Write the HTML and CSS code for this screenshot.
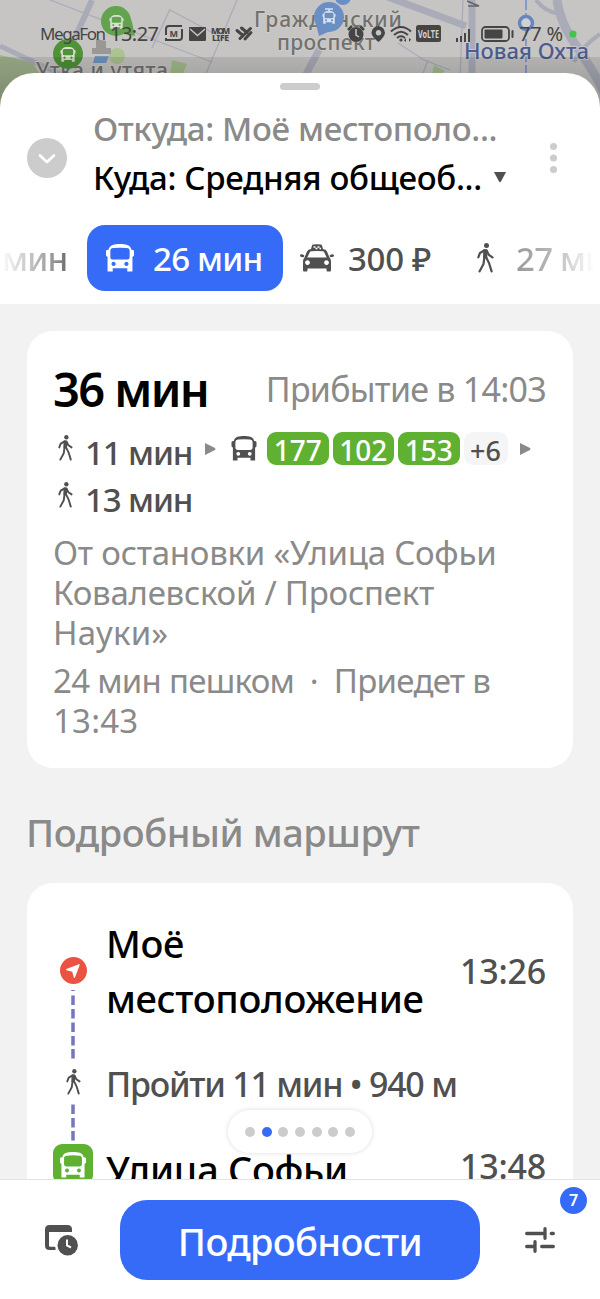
FILE: index.html
```
<!DOCTYPE html>
<html lang="ru">
<head>
<meta charset="utf-8">
<title>Маршрут</title>
<link rel="stylesheet" href="styles.css">
</head>
<body>
<svg class="defs" width="0" height="0" aria-hidden="true">
  <symbol id="bus" viewBox="0 0 27 27"><path fill-rule="evenodd" d="M6.500.9C10-.2 17-.2 20.500.9C23 1.700 24.200 3.500 24.500 5.500L26.300 5.800Q27 6.200 27 7V11Q26.800 12 25.500 12.300V26.500H20.500V23.500H6.500V26.500H1.500V12.300Q.2 12 0 11V7Q0 6.200.7 5.800L2.500 5.500C2.800 3.500 4 1.700 6.500.9ZM7 3.800Q4.200 4 4.200 6.500V12.500Q4.200 15 7 15H20Q22.800 15 22.800 12.500V6.500Q22.800 4 20 3.800Q13.500 3.200 7 3.800ZM7.300 17.200a2 2 0 1 0 .01 0ZM19.700 17.200a2 2 0 1 0 .01 0Z"/></symbol>
  <symbol id="walk" viewBox="0 0 17 30"><circle cx="9.500" cy="2.600" r="2.500"/><path d="M6.300 6.600 9.600 6 10.600 7 10.200 15 7.200 15.500 6 14Z"/><g fill="none" stroke="currentColor" stroke-width="2.200" stroke-linecap="round" stroke-linejoin="round"><path d="M7.500 7.300 3 10 1.300 14.300M10 8.200 11.800 11.800 15.500 14.300M7.400 14 6.500 21 2.500 28.400M9 14 12 20 14.600 28.400"/></g></symbol>
</svg>
<div class="screen">
  <svg class="map" viewBox="0 0 600 120" width="600" height="120">
    <defs><linearGradient id="shade" x1="0" y1="0" x2="0" y2="1"><stop offset="0" stop-color="#000" stop-opacity=".1"/><stop offset="1" stop-color="#000" stop-opacity=".28"/></linearGradient></defs>
    <rect width="600" height="120" fill="#c6c5c4"/>
    <path fill="#a2b48f" d="M0 55 32 62 70 120H0Z"/>
    <g fill="none" stroke="#a9acb8">
      <path stroke-width="6" d="M92 0 64 62"/><path stroke-width="5" d="M0 46 60 74"/>
      <path stroke-width="7" d="M385-4 466 26M472 0V80M320 48 304 78"/><path stroke-width="9" d="M557 0C562 36 585 52 604 92"/>
      <path stroke-width="4" d="M536 0Q545 12 560 14M600 34Q580 48 574 62"/>
      <g stroke-width="1.300"><path d="M50 0 212 62M170 9 152 48M237 0 205 76M170 10 230 42M398 43 424 60 450 70M422 76 428 60M463 0 460 80"/></g>
      <path stroke="#7f9cc9" stroke-width="2" stroke-dasharray="10 3" d="M526 0V80"/>
    </g>
    <path fill="none" stroke="#666" stroke-width="1.500" d="M467 1 479 6H468"/>
    <path fill="#a5bd8c" d="M172 60 187 64 182 76H170ZM434 65 445 71 438 76H432Z"/>
    <circle cx="117" cy="56" r="8" fill="#abc38f"/><path fill="#999894" d="M96 39 106 41V48H111V54H92V48H96Z"/><path fill="#7195bd" d="M95 56H109L106 63H93Z"/>
    <path fill="#63a24e" d="M104 30a14 14 0 1 1 28-8L135 36Z"/><circle cx="116" cy="21" r="15" fill="#63a24e"/>
    <path fill="#63a24e" d="M54 49 72 39 80 46Z"/>
    <g class="place"><text x="254" y="27" textLength="148">Гражданский</text><text x="277" y="50" textLength="98">проспект</text><text x="36" y="78" textLength="132">Утка и утята</text></g>
    <text class="metro" x="464" y="59" textLength="125">Новая Охта</text>
    <circle cx="68" cy="54" r="15" fill="#4f9238"/>
    <g fill="#d8e0d2"><use href="#bus" x="109" y="15" width="15" height="14"/><use href="#bus" x="60" y="47" width="16" height="15"/></g>
    <path fill="#698fc5" d="M316 24 319 36 337 28Z"/><circle cx="329" cy="17" r="15" fill="#698fc5"/><circle cx="343" cy="-3" r="8" fill="#698fc5"/>
    <use href="#bus" x="322" y="11" width="14" height="13" fill="#dce3ee"/><path fill="none" stroke="#dce3ee" stroke-width="1.500" d="M325 9H333M329 9V12"/>
    <circle cx="526" cy="23" r="6.500" fill="#cfd0d4" stroke="#6786bd" stroke-width="3.500"/>
    <rect y="57" width="600" height="63" fill="url(#shade)"/>
    <g fill="#454545">
      <text class="carrier" x="40" y="40" textLength="66">MegaFon</text><text class="clock" x="110" y="41" textLength="49">13:27</text>
      <path fill="none" stroke="#454545" stroke-width="2" d="M166 35V29Q166 26 169 26H182M166 38V40H179Q182 40 182 37V29"/><text class="tiny" x="169.500" y="37" textLength="9">M</text>
      <rect x="189" y="27" width="17" height="14" rx="1"/><path fill="none" stroke="#c6c5c4" stroke-width="1.500" d="M190 29 197.500 35.500 205 29"/>
      <text class="micro" x="211" y="33.500" textLength="19">MOM</text><text class="micro" x="212" y="41" textLength="17">LIFE</text>
      <path fill="none" stroke="#454545" stroke-width="3" stroke-linecap="round" d="M237 30.500 243 35.500M241.500 28 247 32.500M250.500 28.500 240 38.500M251 32.500 245 39"/>
      <circle cx="356" cy="34.500" r="7.500"/><path fill="none" stroke="#454545" stroke-width="2.500" d="M348 30 352 26M360 26 364 30"/><path fill="none" stroke="#c6c5c4" stroke-width="1.500" d="M356 29V35L359 37"/>
      <path fill-rule="evenodd" d="M378.500 26A7 7 0 0 1 385 33Q384.500 37 378.500 42Q372 37 371.500 33A7 7 0 0 1 378.500 26ZM378.500 30a2.800 2.800 0 1 0 .01 0Z"/>
      <g fill="none" stroke="#454545" stroke-width="2"><path d="M391 31.500Q401 22.500 411 31.500M394 35Q401 28.500 408 35M397 38Q401 34.500 405 38"/></g><circle cx="401" cy="40" r="1.600"/><path d="M406 38v4l-2-1.500M409 42v-4l2 1.500"/>
      <rect x="416" y="25" width="25" height="17" rx="2.500"/><text class="volte" x="418" y="37.500" textLength="21" lengthAdjust="spacingAndGlyphs">VoLTE</text>
      <path d="M456 38h2v4h-2ZM460 36h2v6h-2ZM464 33h2v9h-2ZM468 29h2v13h-2Z"/>
      <rect x="482" y="27" width="27" height="14" rx="3.500" fill="none" stroke="#454545" stroke-width="1.800"/><rect x="484.500" y="29.500" width="18" height="9" rx="1"/><rect x="511.500" y="30" width="2" height="8" rx="1"/>
      <text class="clock" x="519" y="41" textLength="44">77 %</text><circle cx="573" cy="34" r="3.500" fill="#42c34b"/>
    </g>
  </svg>

  <header class="sheet-head">
    <span class="handle"></span>
    <div class="head-row">
      <svg class="collapse" viewBox="0 0 40 40"><circle cx="20" cy="20" r="20" fill="#ccc"/><path d="M13 17.500 20 24 27 17.500" fill="none" stroke="#fff" stroke-width="2.800" stroke-linecap="round" stroke-linejoin="round"/></svg>
      <div class="endpoints">
        <div class="from">Откуда: Моё местополо...</div>
        <div class="to"><span>Куда: Средняя общеоб...</span><svg class="caret" viewBox="0 0 12 11"><path fill="#505050" d="M0 0H12L7 9.500Q6 11 5 9.500Z"/></svg></div>
      </div>
      <svg class="more" viewBox="0 0 7 30" fill="#ccc"><circle cx="3.500" cy="3.500" r="3.500"/><circle cx="3.500" cy="15" r="3.500"/><circle cx="3.500" cy="26.500" r="3.500"/></svg>
    </div>
    <nav class="tabs">
      <span class="tab-cut">мин</span>
      <span class="tab-active"><svg class="ic-bus"><use href="#bus"/></svg><span>26 мин</span></span>
      <span class="tab-taxi"><svg class="ic-taxi" viewBox="0 0 34 28"><path fill="#505050" fill-rule="evenodd" d="M11 5 12 1.500Q12.200.5 13.200.4Q17 0 20.800.4Q21.800.5 22 1.500L23 5Q26 5.200 27 7.500L29.500 13.500Q31 15 31 17.500V26.500Q31 27.500 30 27.500H27.500Q26.500 27.500 26.500 26.500V24.500H7.500V26.500Q7.500 27.500 6.500 27.500H4Q3 27.500 3 26.500V17.500Q3 15 4.500 13.500L7 7.500Q8 5.200 11 5ZM9.800 8.200 7.300 13.500H26.700L24.200 8.200Q23.800 7.300 22.800 7.200Q17 6.700 11.200 7.200Q10.200 7.300 9.800 8.200ZM7.500 16.200a2.400 2.400 0 1 0 .01 0ZM26.500 16.200a2.400 2.400 0 1 0 .01 0Z"/><path fill="#fff" d="M13.500 2.300h2v1.500h-2ZM17.500 2.300h2v1.500h-2ZM15.500 3.800h2v1.500h-2ZM19.500 3.800h1.500v1.500h-1.500Z"/><path stroke="#505050" stroke-width="2.500" stroke-linecap="round" d="M1.300 11.500 3 12M32.700 11.500 31 12"/></svg><span>300 ₽</span></span>
      <span class="tab-walk"><svg class="ic-walk"><use href="#walk"/></svg><span class="fade-out">27 мин</span></span>
    </nav>
  </header>

  <main class="content">
    <section class="card summary">
      <div class="total"><b>36 мин</b><span class="arrive">Прибытие в 14:03</span></div>
      <div class="legs">
        <div class="leg"><svg class="ic-leg"><use href="#walk"/></svg><span class="mins">11 мин</span><svg class="next" viewBox="0 0 11 12"><path fill="#8a8a8a" d="M0 0 10 5Q11 6 10 7L0 12Z"/></svg><svg class="ic-legbus"><use href="#bus"/></svg>
          <span class="lines"><i>177</i><i>102</i><i>153</i><i class="extra">+6</i></span><svg class="next last" viewBox="0 0 11 12"><path fill="#8a8a8a" d="M0 0 10 5Q11 6 10 7L0 12Z"/></svg></div>
        <div class="leg"><svg class="ic-leg"><use href="#walk"/></svg><span class="mins">13 мин</span></div>
      </div>
      <p class="note stop-name">От остановки «Улица Софьи<br>Ковалевской / Проспект<br><span class="loose">Науки»</span></p>
      <p class="note second">24 мин пешком&nbsp; ·&nbsp; Приедет в<br><span class="loose">13:43</span></p>
    </section>
    <h2 class="section">Подробный маршрут</h2>
    <section class="card route">
      <div class="rail">
        <svg class="here" viewBox="0 0 27 27"><circle cx="13.500" cy="13.500" r="13.500" fill="#ea5341"/><path fill="#fff" d="M18.800 7.200Q20 6.900 19.700 8L15 20.500Q14.300 21.500 13.700 20.300L12.300 14.700 6.500 13.300Q5.300 12.700 6.400 12Z"/></svg>
        <svg class="dash long" viewBox="0 0 4 68"><path d="M2 0V1M2 5.500V15M2 19V28.500M2 32.500V42M2 46V55.500M2 59V68.500"/></svg>
        <svg class="ic-leg"><use href="#walk"/></svg>
        <svg class="dash short" viewBox="0 0 4 37"><path d="M2 .5V10M2 14V23.500M2 27V36.500"/></svg>
        <span class="stop"><svg class="ic-stop"><use href="#bus"/></svg></span>
      </div>
      <div class="steps">
        <div class="step"><strong>Моё<br>местоположение</strong><time>13:26</time></div>
        <div class="walkstep">Пройти 11 мин • 940 м</div>
        <div class="step cut"><strong>Улица Софьи</strong><time>13:48</time></div>
      </div>
    </section>
  </main>

  <div class="pager"><i></i><i class="on"></i><i></i><i></i><i></i><i></i><i></i></div>

  <footer class="bar">
    <svg class="ic-when" viewBox="0 0 33 31"><path fill="#505050" d="M4.500 0H22.500Q27 0 27 4.500V7H4V20.500Q4 21.800 5.200 21.800H9.500Q10.500 21.800 10.500 23V25H4.500Q0 25 0 20.500V4.500Q0 0 4.500 0Z"/><circle cx="22.700" cy="20.300" r="10.200" fill="#505050"/><path d="M22 14.500V20.500L26 22.500" fill="none" stroke="#fff" stroke-width="2"/></svg>
    <button class="details" type="button">Подробности</button>
    <span class="filters"><svg class="ic-filter" viewBox="0 0 30 26"><path fill="none" stroke="#505050" stroke-width="3.300" stroke-linecap="round" d="M1.700 6.500H20M20 1.700V11.300M26.300 6.500H28.300M1.700 19.500H10M10 14.700V24.300M16.700 19.500H28.300"/></svg><i class="badge">7</i></span>
  </footer>
</div>
</body>
</html>
```
FILE: styles.css
```
* { box-sizing: border-box; }
body { margin: 0; font-family: "Noto Sans", sans-serif; font-size: 33px; color: #505050; }
p, h2 { margin: 0; font-weight: 400; }
i { font-style: normal; }
svg { display: block; flex: none; overflow: visible; }
.defs { position: absolute; }
.screen { position: relative; width: 600px; height: 1299px; display: flex; flex-direction: column; overflow: hidden; padding-top: 73px; background: #f2f2f2; white-space: nowrap; }
.map { position: absolute; left: 0; top: 0; }
.place text { font-size: 21px; font-weight: 500; fill: #72716f; stroke: #cccbc9; stroke-width: 2px; paint-order: stroke; }
.metro { font-size: 22px; font-weight: 500; fill: #4d5c8c; stroke: #c8c8cb; stroke-width: 2px; paint-order: stroke; }
.carrier { font-size: 17px; }
.clock { font-size: 20px; }
.tiny { font-size: 9px; font-weight: 700; }
.micro { font-size: 8.500px; font-weight: 800; }
.volte { font-size: 10px; font-weight: 700; fill: #d2d2d2; }

.sheet-head { position: relative; height: 231px; flex: none; padding-top: 10px; background: #fff; border-radius: 34px 34px 0 0; }
.handle { display: block; width: 40px; height: 7px; margin: 0 auto 13px; border-radius: 4px; background: #ccc; }
.head-row { display: flex; align-items: center; height: 98px; padding: 0 43px 0 27px; margin-bottom: 24px; }
.collapse { width: 40px; height: 40px; margin-top: 11px; }
.endpoints { flex: 1; margin-left: 26px; padding-top: 2px; line-height: 49px; font-weight: 500; letter-spacing: -.33px; }
.from { color: #8a8a8a; }
.to { display: flex; align-items: center; color: #000; }
.caret { width: 12px; height: 11px; margin-left: 12px; }
.more { width: 7px; height: 30px; margin-top: 11px; }
.tabs { display: flex; align-items: center; height: 66px; font-weight: 500; letter-spacing: -.75px; overflow: hidden; }
.tabs > span { flex: none; }
.tab-cut { width: 83px; padding-left: 2px; color: transparent; background: linear-gradient(90deg, #fff 0, #f0f0f0 8px, #888 60px, #666 68px); -webkit-background-clip: text; background-clip: text; }
.tab-active { display: flex; align-items: center; gap: 19px; width: 196px; height: 66px; margin-left: 4px; padding-left: 19px; border-radius: 18px; background: #366bf8; color: #fff; fill: #fff; }
.ic-bus { width: 28px; height: 28px; }
.tab-taxi { display: flex; align-items: center; gap: 14px; width: 149px; margin-left: 17px; letter-spacing: -.3px; }
.ic-taxi { width: 34px; height: 28px; }
.tab-walk { display: flex; align-items: center; gap: 22px; margin-left: 28px; }
.ic-walk { width: 17px; height: 30px; fill: #505050; color: #505050; }
.fade-out { color: transparent; background: linear-gradient(90deg, #999, #bbb 40px, #fff 78px); -webkit-background-clip: text; background-clip: text; }

.content { flex: 1; min-height: 0; overflow: hidden; padding: 27px 27px 0; }
.card { background: #fff; border-radius: 26px; }
.summary { height: 437px; padding: 26px 27px 0; }
.total { display: flex; justify-content: space-between; height: 64px; line-height: 64px; }
.total b { margin-left: -1px; font-size: 47px; font-weight: 600; color: #000; letter-spacing: -1.6px; }
.arrive { font-size: 34px; color: #8a8a8a; letter-spacing: -.75px; }
.legs { margin-top: 8px; font-weight: 500; }
.leg { display: flex; height: 47px; line-height: 47px; }
.ic-leg { width: 15px; height: 26px; margin: 6px 0 0 4px; fill: #505050; color: #505050; }
.mins { width: 119px; margin-left: 12px; letter-spacing: -1.1px; }
.next { width: 11px; height: 12px; margin: 14px 0 0 1px; }
.ic-legbus { width: 26px; height: 25px; margin: 7px 10px 0 15px; fill: #505050; }
.lines { display: flex; gap: 4px; padding-top: 3px; }
.lines i { width: 61.500px; height: 33px; border-radius: 9px; background: #60b131; color: #fff; font-size: 28px; line-height: 37px; text-align: center; }
.lines .extra { width: 44px; background: #f5f5f5; color: #505050; font-size: 27px; }
.last { margin-left: 12px; }
.note { margin-left: -1px; line-height: 40px; color: #8a8a8a; }
.stop-name { margin-top: 10px; letter-spacing: -.25px; }
.second { margin-top: 8px; letter-spacing: -.72px; }
.loose { letter-spacing: .2px; }
.section { margin: 39px 0 26px -1px; font-size: 38px; line-height: 50px; font-weight: 500; color: #8a8a8a; letter-spacing: -.45px; }
.route { display: flex; height: 500px; padding: 33px 27px 0 26px; }
.rail { display: flex; flex-direction: column; align-items: center; width: 40px; padding-top: 41px; }
.here { width: 27px; height: 27px; }
.rail .ic-leg { margin: 11px 0 9px; }
.dash { width: 4px; fill: none; stroke: #7476c0; stroke-width: 3.500px; }
.long { height: 68px; margin-top: 6px; }
.short { height: 37px; margin-bottom: 3px; }
.stop { display: flex; justify-content: center; width: 40px; height: 40px; padding-top: 8px; border-radius: 9px; background: #60b131; fill: #fff; }
.ic-stop { width: 26px; height: 26px; }
.steps { flex: 1; margin-left: 13px; }
.step { display: flex; justify-content: space-between; align-items: center; }
.step strong { font-size: 38px; line-height: 55px; font-weight: 500; color: #000; letter-spacing: -.33px; }
.step time { font-size: 34px; line-height: 49px; font-weight: 500; letter-spacing: -.2px; }
.walkstep { height: 46px; margin: 35px 0; font-size: 34px; line-height: 46px; font-weight: 500; letter-spacing: -1.25px; }
.cut { align-items: flex-start; }

.pager { position: absolute; left: 228px; top: 1110px; display: flex; align-items: center; justify-content: center; gap: 6.700px; width: 144px; height: 43px; border-radius: 22px; background: #fff; box-shadow: 0 0 5px rgba(0, 0, 0, .14); }
.pager i { width: 10px; height: 10px; border-radius: 50%; background: #ccc; }
.pager .on { background: #366bf8; }
.bar { position: relative; flex: none; display: flex; align-items: center; height: 120px; padding: 1px 45px 0; border-top: 1px solid #e3e3e3; background: #fff; }
.ic-when { width: 33px; height: 31px; }
.details { width: 360px; height: 80px; margin: 0 45px 0 42px; padding: 2px 0 0; border: 0; border-radius: 27px; background: #366bf8; color: #fff; font: 500 38px/78px "Noto Sans", sans-serif; letter-spacing: -.65px; }
.filters { position: relative; }
.ic-filter { width: 30px; height: 26px; }
.badge { position: absolute; left: 35px; top: -40px; width: 27px; height: 27px; border-radius: 50%; background: #366bf8; color: #fff; font-size: 16px; font-weight: 600; line-height: 27px; text-align: center; }
```
